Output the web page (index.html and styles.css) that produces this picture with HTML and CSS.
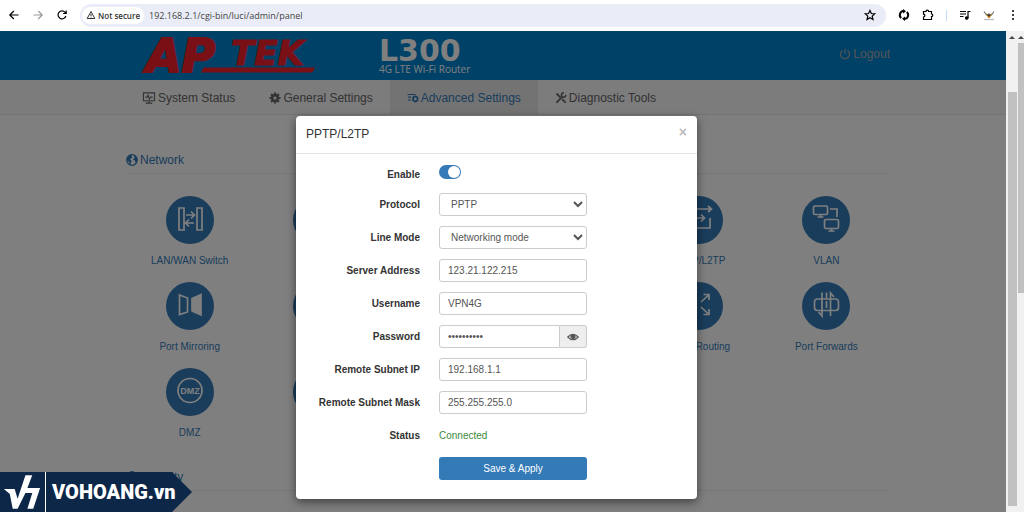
FILE: index.html
```html
<!DOCTYPE html>
<html lang="en">
<head>
    <meta charset="UTF-8">
    <meta name="viewport" content="width=device-width, initial-scale=1.0">
    <title>L300 4G LTE Wi-Fi Router</title>
    <link rel="stylesheet" href="styles.css">
</head>
<body>
    <!-- Browser toolbar -->
    <div class="toolbar">
        <button class="tool" aria-label="Back"><svg viewBox="0 0 12 12"><path d="M10.5 6H2M5.8 2 1.8 6l4 4"/></svg></button>
        <button class="tool faded" aria-label="Forward"><svg viewBox="0 0 12 12"><path d="M1.5 6H10M6.2 2l4 4-4 4"/></svg></button>
        <button class="tool" aria-label="Reload"><svg viewBox="0 0 12 12"><path d="M9.9 7a4 4 0 1 1-.8-3.7L10 4.4M10.2 1.5v3H7.1"/></svg></button>
        <div class="address">
            <span class="secure">
                <svg viewBox="0 0 12 12"><path d="M6 1.8 1.4 10.2h9.2zM6 4.8v2.4M6 8v1"/></svg>
                Not secure
            </span>
            <input class="url" type="text" aria-label="Address" value="192.168.2.1/cgi-bin/luci/admin/panel">
            <button class="tool star" aria-label="Bookmark"><svg viewBox="0 0 12 12"><path d="m6 1.4 1.4 3.1 3.4.3-2.6 2.3.8 3.4-3-1.8-3 1.8.8-3.4L1.2 4.8l3.4-.3z"/></svg></button>
        </div>
        <div class="extensions">
            <button class="tool" aria-label="Sync"><svg class="heavy" viewBox="0 0 12 12"><path d="M3.2 9A4 4 0 0 1 5.5 2M8.8 3A4 4 0 0 1 6.5 10"/><path fill="currentColor" stroke="none" d="M5 0l3 2.2L5 4.4zM7 7.6v4.4L4 9.8z"/></svg></button>
            <button class="tool" aria-label="Extensions"><svg viewBox="0 0 12 12"><path d="M1.5 2.5h2.500a1.300 1.300 0 0 1 2.600 0h2.900v2.500a1.300 1.300 0 0 1 0 2.600v2.900h-8V8a1.300 1.300 0 0 0 0-2.800z"/></svg></button>
            <span class="divider"></span>
            <button class="tool" aria-label="Media"><svg viewBox="0 0 12 12"><path d="M1 2.5h6M1 5h6M1 7.5h3.5M9 9V2.5h2.5"/><circle cx="7.8" cy="9" r="1.2" fill="currentColor"/></svg></button>
            <button class="tool" aria-label="Profile"><svg viewBox="0 0 12 12"><path stroke="#777" d="M1 2.5 3.5 6 6 5l2.5 1L11 2.5"/><path stroke="#bbb" d="M1 10.5h10"/><path fill="#c98a1b" stroke="none" d="M3 4.5 6 6l3-1.5L7 9H5z"/><path stroke="#333" d="M4.5 5.5 6 7l1.5-1.5"/></svg></button>
            <button class="tool" aria-label="Menu"><svg viewBox="0 0 12 12"><g fill="currentColor" stroke="none"><circle cx="6" cy="2" r="1"/><circle cx="6" cy="6" r="1"/><circle cx="6" cy="10" r="1"/></g></svg></button>
        </div>
    </div>

    <div class="window">
        <div class="page">
            <header class="header">
                <svg class="logo" viewBox="0 0 176 36" role="img" aria-label="APTEK">
                    <text class="logo-big" x="4" y="34">AP</text>
                    <text class="logo-small" x="89" y="27">TEK</text>
                    <path class="logo-line" d="M62 30h110l-2 4H60z"/>
                </svg>
                <div class="model">
                    <strong>L300</strong>
                    <span>4G LTE Wi-Fi Router</span>
                </div>
                <a class="logout" href="#">
                    <svg viewBox="0 0 12 12"><path d="M3.5 2.5a4.5 4.5 0 1 0 5 0M6 .8v5"/></svg>
                    Logout
                </a>
            </header>

            <nav class="nav">
                <a href="#">
                    <svg class="wide" viewBox="0 0 14 13"><path d="M1 1h12v8.500H1zM7 9.500V12M3.500 12h7M3 5.500h2l1-2 1.500 4 1.200-2H11"/></svg>
                    System Status
                </a>
                <a href="#">
                    <svg viewBox="0 0 12 12"><circle cx="6" cy="6" r="2.8" stroke-width="2.4"/><path stroke-width="2.2" d="M6 .5v2M6 9.500v2M.5 6h2M9.500 6h2M2.100 2.100l1.400 1.400M8.500 8.500l1.400 1.400M9.900 2.100 8.500 3.500M3.500 8.500 2.100 9.900"/></svg>
                    General Settings
                </a>
                <a class="active" href="#">
                    <svg viewBox="0 0 12 12"><path d="M.5 2.500h8M1 5.200h3M1 8h3"/><circle cx="8.3" cy="7" r="2.3" stroke-width="1.7"/><path d="M8.300 3.500v1M8.300 9.500v1M11 5.300l-.7.5M11 8.700l-.7-.5M5.500 5.300l.7.5M5.500 8.700l.7-.5"/></svg>
                    Advanced Settings
                </a>
                <a href="#">
                    <svg viewBox="0 0 12 12"><path stroke-width="1.8" d="m1.500 1.500 3.800 3.800M7.200 7.200l3.400 3.400M1.400 10.600l6-6"/><path stroke-width="1.6" d="M10.800 2.800a2.200 2.200 0 1 1-2-2"/></svg>
                    Diagnostic Tools
                </a>
            </nav>

            <main class="content">
                <h2>
                    <svg viewBox="0 0 12 12"><circle cx="6" cy="6" r="5.3"/><path fill="currentColor" stroke="none" d="M1 4 3.500 1 6 .8 5.500 2.500 6.500 3.500 5 4.500 4 5.500l1.500 1L5 9 4 10.500 3 8 1 6.500zM7.500 2l2-.5L11.500 5l-.5 3-1.500 1L9 6.500 7 6l.5-1.500L9 4z"/></svg>
                    Network
                </h2>
                <div class="tiles">
                    <a class="tile col-1" href="#">
                        <span class="disc"><svg viewBox="0 0 48 48"><path d="M13 12h5v22h-5zM31 12h5v22h-5zM20 19h8M25 15.500l3.500 3.500-3.500 3.500M28 27h-8M23 23.500 19.500 27l3.500 3.500"/></svg></span>
                        LAN/WAN Switch
                    </a>
                    <a class="tile col-2" href="#" aria-label="Network tool"><span class="disc"></span></a>
                    <a class="tile col-5" href="#">
                        <span class="disc"><svg viewBox="0 0 48 48"><path d="M13 20v-7h23M33 10l3.500 3-3.500 3M20 22h9M26 18.500l3.500 3.500-3.500 3.500M35 22v10H13v-7"/></svg></span>
                        PPTP/L2TP
                    </a>
                    <a class="tile col-6" href="#">
                        <span class="disc"><svg viewBox="0 0 48 48"><rect x="11.5" y="10" width="14" height="8.5" rx="1.5"/><path d="M18.500 18.500V21M15.500 21h6M28 13h7v8"/><rect x="22.5" y="23.5" width="14" height="9" rx="1.5"/><path d="M29.500 32.500V35M26.500 35h6"/></svg></span>
                        VLAN
                    </a>

                    <a class="tile col-1" href="#">
                        <span class="disc"><svg viewBox="0 0 48 48"><path d="m13.500 13 8 3v14l-8 2.500z"/><path fill="currentColor" d="m35 12.500-9 4V29l9 4z"/></svg></span>
                        Port Mirroring
                    </a>
                    <a class="tile col-2" href="#" aria-label="Network tool"><span class="disc"></span></a>
                    <a class="tile col-5" href="#">
                        <span class="disc"><svg viewBox="0 0 48 48"><path d="m26 20 7.500-7M28.500 12.500h5.500V18M26 25l7.500 7M28.500 32.500h5.500V27M22 20l-7.500-7M19.500 12.500H14V18M22 25l-7.500 7M19.500 32.500H14V27"/></svg></span>
                        Static Routing
                    </a>
                    <a class="tile col-6" href="#">
                        <span class="disc"><svg viewBox="0 0 48 48"><rect x="12.5" y="17" width="24" height="11.5" rx="3"/><path d="M20 10.500V34l-3.500-4M24.500 10.500V17M24.500 19v7M28.500 34V11l3.500 4M20 34V19"/></svg></span>
                        Port Forwards
                    </a>

                    <a class="tile col-1" href="#">
                        <span class="disc"><svg viewBox="0 0 48 48"><circle cx="24" cy="22.5" r="12"/><text class="dmz" x="24" y="26">DMZ</text></svg></span>
                        DMZ
                    </a>
                    <a class="tile col-2" href="#" aria-label="Network tool"><span class="disc"></span></a>
                </div>
                <h2>
                    <svg viewBox="0 0 12 12"><path fill="currentColor" d="M6 .5 11 2.500v4L6 11.500 1 6.500v-4z"/></svg>
                    Security
                </h2>
            </main>
        </div>

        <!-- Scrollbars -->
        <div class="scrollbar inner"><span class="arrow"></span><span class="thumb"></span></div>
        <div class="scrollbar outer"><span class="arrow"></span><span class="thumb"></span></div>

        <!-- PPTP/L2TP dialog -->
        <div class="backdrop">
            <form class="modal" role="dialog" aria-labelledby="modal-title">
                <div class="modal-header">
                    <h1 id="modal-title">PPTP/L2TP</h1>
                    <button class="close" type="button" aria-label="Close">×</button>
                </div>
                <div class="modal-body">
                    <label for="enable">Enable</label>
                    <input class="switch" id="enable" type="checkbox" checked>

                    <label for="protocol">Protocol</label>
                    <select class="field" id="protocol"><option>PPTP</option></select>

                    <label for="mode">Line Mode</label>
                    <select class="field" id="mode"><option>Networking mode</option></select>

                    <label for="server">Server Address</label>
                    <input class="field" id="server" type="text" value="123.21.122.215">

                    <label for="username">Username</label>
                    <input class="field" id="username" type="text" value="VPN4G">

                    <label for="password">Password</label>
                    <div class="password">
                        <input class="field" id="password" type="password" value="0123456789">
                        <button class="reveal" type="button" aria-label="Show password">
                            <svg viewBox="0 0 12 12"><path d="M.8 6Q6 .5 11.200 6 6 11.500.8 6z"/><circle cx="6" cy="5.5" r="2" fill="currentColor"/></svg>
                        </button>
                    </div>

                    <label for="subnet-ip">Remote Subnet IP</label>
                    <input class="field" id="subnet-ip" type="text" value="192.168.1.1">

                    <label for="subnet-mask">Remote Subnet Mask</label>
                    <input class="field" id="subnet-mask" type="text" value="255.255.255.0">

                    <label for="status">Status</label>
                    <output class="status" id="status">Connected</output>

                    <button class="save" type="button">Save &amp; Apply</button>
                </div>
            </form>
        </div>
    </div>

    <!-- Watermark banner -->
    <div class="banner">
        <svg class="mark" viewBox="0 0 46 40"><path d="M4 17h11l3 10L26 3h7l-5 13h13l-7 21h-6l5-16h-7l-8 16h-5L10 22z"/></svg>
        <span>VOHOANG.vn</span>
    </div>
</body>
</html>
```
FILE: styles.css
```css
/* Basic Reset */
* {
    margin: 0;
    padding: 0;
    box-sizing: border-box;
}

body {
    height: 100vh;
    display: flex;
    flex-direction: column;
    overflow: hidden;
    font-family: "Liberation Sans", Arial, sans-serif;
    font-size: 10px;
    background-color: #fff;
}

a {
    color: inherit;
    text-decoration: none;
}

button {
    font: inherit;
    border: none;
    background: none;
    cursor: pointer;
}

svg {
    width: 12px;
    height: 12px;
    flex: none;
    fill: none;
    stroke: currentColor;
    stroke-width: 1.2;
}

/* Browser toolbar */
.toolbar {
    display: flex;
    align-items: center;
    gap: 12px;
    height: 31px;
    flex: none;
    padding: 0 5px 1px 8px;
    color: #333;
}

.tool {
    display: flex;
}

.faded {
    color: #999;
}

.heavy {
    stroke-width: 2;
}

.address {
    flex: 1;
    display: flex;
    align-items: center;
    gap: 5px;
    height: 23px;
    padding: 0 10px 0 2px;
    border-radius: 12px;
    background-color: #eaedf7;
}

.secure {
    display: flex;
    align-items: center;
    gap: 2px;
    height: 17px;
    padding: 0 4px;
    border-radius: 9px;
    background-color: #fff;
    font-family: "Open Sans", sans-serif;
    font-size: 8px;
    font-weight: 600;
}

.secure svg {
    width: 10px;
    height: 10px;
}

.url {
    flex: 1;
    border: none;
    outline: none;
    background: none;
    color: #444;
    font-family: "Open Sans", sans-serif;
    font-size: 9px;
}

.extensions {
    display: flex;
    align-items: center;
    gap: 12px;
}

.divider {
    width: 1px;
    height: 11px;
    background-color: #c5dcf8;
}

/* Page area */
.window {
    flex: 1;
    min-height: 0;
    display: flex;
    position: relative;
}

.page {
    flex: 1;
    overflow: hidden;
}

.header {
    display: flex;
    align-items: center;
    height: 49px;
    padding: 0 116px 0 142px;
    background-color: #0082ce;
}

.logo {
    width: 176px;
    height: 36px;
    overflow: visible;
    fill: #f0202c;
    stroke: #f0202c;
    font-family: "DejaVu Sans", sans-serif;
    font-weight: bold;
    font-style: italic;
}

.logo-big {
    font-size: 46px;
    stroke-width: 2;
}

.logo-small {
    font-size: 34px;
}

.model {
    display: flex;
    flex-direction: column;
    margin-left: 61px;
    padding-top: 2px;
    color: #fff;
    font-family: "Open Sans", sans-serif;
    line-height: 12px;
}

.model strong {
    font-family: "DejaVu Sans", sans-serif;
    font-size: 30px;
    line-height: 24px;
}

.logout {
    display: flex;
    align-items: center;
    gap: 2px;
    margin: 0 0 4px auto;
    color: #aaa;
    font-size: 12px;
}

.nav {
    display: flex;
    height: 35px;
    padding-left: 125px;
    border-bottom: 1px solid #e7e7e7;
    background-color: #f8f8f8;
    color: #666;
    font-size: 12px;
}

.nav a {
    display: flex;
    align-items: center;
    gap: 2px;
    padding: 2px 17px 0;
}

.nav .wide {
    width: 14px;
}

.nav .active {
    background-color: #e7e7e7;
    color: #337ab7;
}

.content {
    padding: 35px 116px 0 126px;
    color: #337ab7;
}

.content h2 {
    display: flex;
    align-items: center;
    gap: 2px;
    height: 24px;
    padding-bottom: 3px;
    border-bottom: 1px solid #eee;
    font-size: 12px;
    font-weight: normal;
}

.tiles {
    display: grid;
    grid-template-columns: repeat(6, 1fr);
    row-gap: 11px;
    padding: 22px 0 24px;
}

.tile {
    display: flex;
    flex-direction: column;
    align-items: center;
    gap: 10px;
    height: 75px;
    line-height: 14px;
}

.col-1 {
    grid-column: 1;
}

.col-2 {
    grid-column: 2;
}

.col-5 {
    grid-column: 5;
}

.col-6 {
    grid-column: 6;
}

.disc {
    width: 48px;
    height: 48px;
    border-radius: 50%;
    background-color: #337ab7;
    color: #fff;
}

.disc svg {
    width: 48px;
    height: 48px;
    stroke-width: 1.7;
}

.dmz {
    fill: currentColor;
    stroke: none;
    font-size: 9px;
    font-weight: bold;
    text-anchor: middle;
}

/* Scrollbars */
.scrollbar {
    display: flex;
    flex-direction: column;
    align-items: center;
    background-color: #f1f1f1;
}

.arrow {
    margin: 5px 0 4px;
    border: 3px solid transparent;
    border-top: none;
    border-bottom-color: #444;
}

.thumb {
    flex: none;
    width: 9px;
    background-color: #c1c1c1;
}

.inner {
    width: 12px;
}

.inner .thumb {
    height: 86%;
    margin-top: 49px;
}

.outer {
    width: 6px;
}

.outer .thumb {
    width: 6px;
    height: 52%;
}

/* Modal dialog */
.backdrop {
    position: absolute;
    inset: 0 18px 0 0;
    display: flex;
    justify-content: center;
    align-items: flex-start;
    padding: 85px 13px 0 0;
    background-color: rgba(0, 0, 0, 0.5);
}

.modal {
    width: 401px;
    border-radius: 4px;
    background-color: #fff;
    box-shadow: 0 3px 10px rgba(0, 0, 0, 0.5);
    color: #333;
}

.modal-header {
    display: flex;
    justify-content: space-between;
    height: 38px;
    padding: 10px 10px 0;
    border-bottom: 1px solid #e5e5e5;
}

.modal-header h1 {
    font-size: 12px;
    font-weight: normal;
    line-height: 16px;
}

.close {
    height: 12px;
    color: #bbb;
    font-size: 14px;
    font-weight: bold;
    line-height: 11px;
}

.modal-body {
    display: grid;
    grid-template-columns: 124px 148px;
    grid-auto-rows: 23px;
    gap: 10px 19px;
    align-items: center;
    padding: 6px 0 19px;
}

.modal-body label {
    font-weight: bold;
    text-align: right;
}

.modal-body label:first-child {
    padding-top: 5px;
}

.field {
    width: 100%;
    height: 23px;
    padding: 0 8px;
    border: 1px solid #ccc;
    border-radius: 3px;
    background-color: #fff;
    color: #555;
    font-family: inherit;
    font-size: 10px;
}

select.field {
    padding: 0 0 0 7px;
}

.switch {
    appearance: none;
    display: flex;
    justify-content: flex-end;
    width: 22px;
    height: 14px;
    padding: 1px;
    border-radius: 7px;
    background-color: #337ab7;
}

.switch::before {
    content: "";
    width: 12px;
    height: 12px;
    border-radius: 50%;
    background-color: #fff;
}

.password {
    display: flex;
}

.password .field {
    flex: 1;
    min-width: 0;
    border-radius: 3px 0 0 3px;
}

.reveal {
    display: flex;
    align-items: center;
    justify-content: center;
    width: 27px;
    border: 1px solid #ccc;
    border-left: none;
    border-radius: 0 3px 3px 0;
    background-color: #eee;
    color: #555;
}

.status {
    color: #3c8a3c;
}

.save {
    grid-column: 2;
    height: 23px;
    border-radius: 3px;
    background-color: #337ab7;
    color: #fff;
}

/* Watermark banner */
.banner {
    position: absolute;
    left: 0;
    bottom: 0;
    display: flex;
    align-items: center;
    width: 192px;
    height: 40px;
    background-color: #0c2748;
    clip-path: polygon(0 0, 172px 0, 100% 50%, 172px 100%, 0 100%);
    color: #fff;
    font-family: Roboto, sans-serif;
    font-size: 20px;
    font-weight: 900;
}

.mark {
    width: 46px;
    height: 40px;
    margin-right: 6px;
    border-right: 1px solid #fff;
    fill: #fff;
    stroke: none;
}
```
